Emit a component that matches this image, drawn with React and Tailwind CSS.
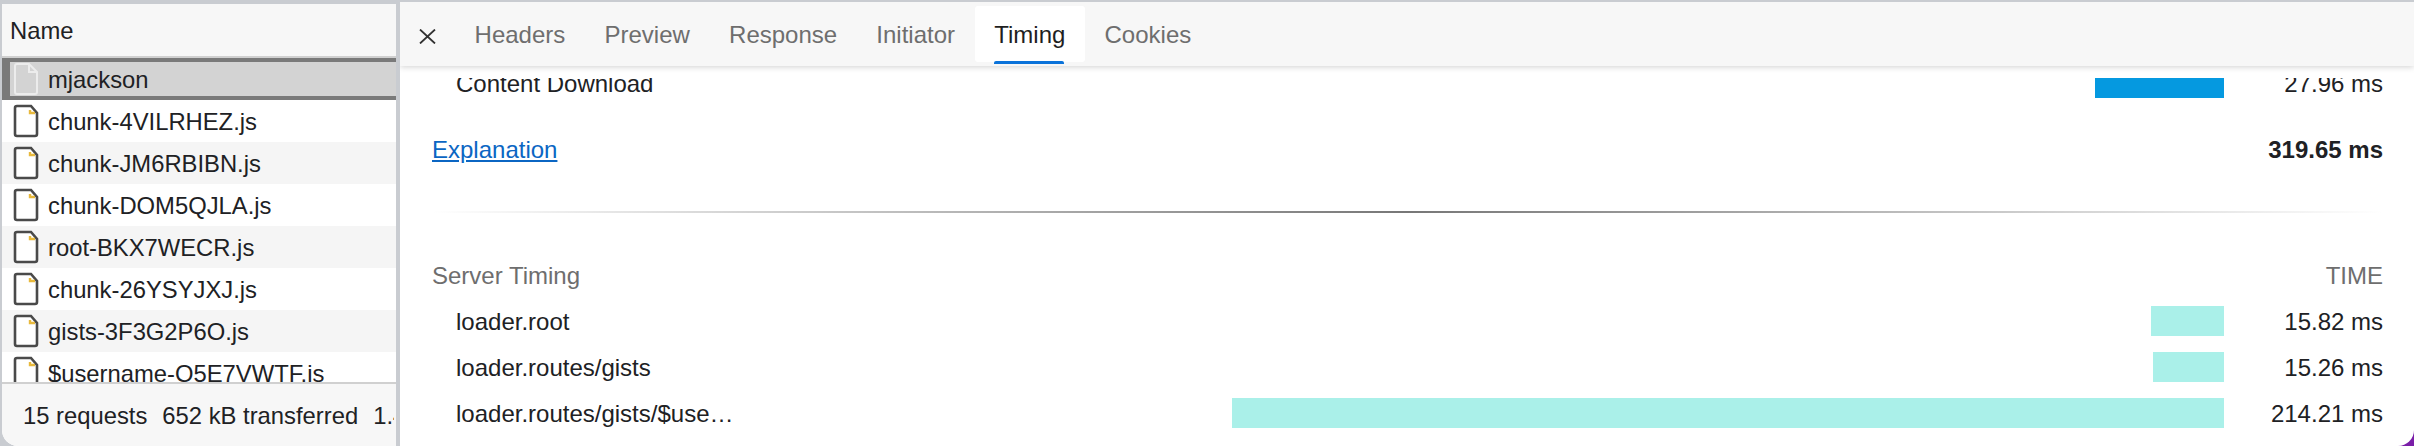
import React from "react";

const requests = [
  { name: "mjackson", selected: true },
  { name: "chunk-4VILRHEZ.js" },
  { name: "chunk-JM6RBIBN.js", striped: true },
  { name: "chunk-DOM5QJLA.js" },
  { name: "root-BKX7WECR.js", striped: true },
  { name: "chunk-26YSYJXJ.js" },
  { name: "gists-3F3G2P6O.js", striped: true },
  { name: "$username-O5E7VWTF.js" },
];

const tabs = ["Headers", "Preview", "Response", "Initiator", "Timing", "Cookies"];

const serverRows = [
  { label: "loader.root", width: "w-[73px]", time: "15.82 ms" },
  { label: "loader.routes/gists", width: "w-[71px]", time: "15.26 ms" },
  { label: "loader.routes/gists/$use…", width: "w-[992px]", time: "214.21 ms" },
];

function FileIcon({ selected }) {
  if (selected) {
    return (
      <svg width="26" height="34" viewBox="0 0 26 34" className="shrink-0">
        <path d="M2 4a2 2 0 0 1 2-2h12l8 8v20a2 2 0 0 1-2 2H4a2 2 0 0 1-2-2z" fill="#d3d3d3" stroke="#ececec" strokeWidth="2" />
        <path d="M16 2v8h8" fill="none" stroke="#ececec" strokeWidth="2" />
      </svg>
    );
  }
  return (
    <svg width="26" height="34" viewBox="0 0 26 34" className="shrink-0">
      <path d="M2 4a2 2 0 0 1 2-2h14l6 7v21a2 2 0 0 1-2 2H4a2 2 0 0 1-2-2z" fill="#fff" stroke="#4a4a4a" strokeWidth="2.6" />
      <path d="M17 6v3h5" fill="none" stroke="#e8b93c" strokeWidth="2.4" />
    </svg>
  );
}

function RequestRow({ name, selected, striped }) {
  if (selected) {
    return (
      <div className="flex h-[42px] shrink-0 items-center gap-[9px] border-y-4 border-l-8 border-[#7a7a7a] bg-[#d3d3d3] pl-[3px] text-[#202124]">
        <FileIcon selected />
        <span className="pt-[2px]">{name}</span>
      </div>
    );
  }
  return (
    <div className={`flex h-[42px] shrink-0 items-center gap-[9px] pl-[11px] text-[#202124] ${striped ? "bg-[#f5f5f5]" : "bg-white"}`}>
      <FileIcon />
      <span className="pt-[2px]">{name}</span>
    </div>
  );
}

function TimingRow({ label, width, color, time }) {
  return (
    <div className="flex h-[46px] items-center pl-[24px] text-[#202124]">
      <span className="w-[300px] shrink-0 whitespace-nowrap pt-[1px]">{label}</span>
      <div className="flex flex-1 justify-end">
        <div className={`h-[30px] ${width} ${color}`}></div>
      </div>
      <span className="w-[159px] shrink-0 pt-[1px] text-right">{time}</span>
    </div>
  );
}

export default function App() {
  return (
    <div className="flex h-[446px] w-[2414px] overflow-hidden bg-[#c9ccd1] font-['Liberation_Sans',Arial,sans-serif] text-[24px]">
      {/* Request list */}
      <div className="ml-[2px] mt-[4px] flex w-[394px] shrink-0 flex-col overflow-hidden rounded-bl-[16px] bg-white text-[23.8px]">
        <div className="flex h-[54px] shrink-0 items-center border-b-2 border-[#d0d0d0] bg-[#f7f7f7] pl-[8px] pt-[1px] text-[#202124]">
          Name
        </div>
        <div className="flex flex-1 flex-col overflow-hidden">
          {requests.map((r) => (
            <RequestRow key={r.name} {...r} />
          ))}
        </div>
        <div className="h-[64px] shrink-0 border-t-2 border-[#d0d0d0] bg-[#f7f7f7] pl-[21px] pr-[2px] text-[#202124]">
          <div className="flex h-full items-center gap-[15px] overflow-hidden whitespace-nowrap pt-[1px]">
            <span>15 requests</span>
            <span>652 kB transferred</span>
            <span>1.4 MB resources</span>
          </div>
        </div>
      </div>

      {/* Detail panel */}
      <div className="ml-[4px] mt-[2px] flex-1 bg-[#7a1ea8]">
        <div className="flex h-full flex-col overflow-hidden rounded-br-[16px] bg-white">
          <div className="relative z-10 flex h-[64px] shrink-0 items-start bg-[#f7f7f7] pt-[4px] shadow-[0_1px_6px_rgba(0,0,0,0.18)]">
            <div className="flex h-[56px] w-[55px] items-center justify-center pt-[4px]">
              <svg width="17" height="15" viewBox="0 0 17 15" fill="none" stroke="#333" strokeWidth="1.8">
                <path d="M1 0.5l15 14M16 0.5l-15 14" />
              </svg>
            </div>
            {tabs.map((tab) =>
              tab === "Timing" ? (
                <div key={tab} className="relative flex h-[56px] items-center rounded-[3px] bg-white px-[19.6px] pt-[1px] text-[#1f1f1f]">
                  {tab}
                  <div className="absolute bottom-[-2px] left-[19px] right-[21px] h-[3px] rounded-t-[2px] bg-[#0b73da]"></div>
                </div>
              ) : (
                <div key={tab} className="flex h-[56px] items-center px-[19.6px] pt-[1px] text-[#6e6e6e]">
                  {tab}
                </div>
              )
            )}
          </div>

          <div className="mt-[12px] flex-1 overflow-hidden pl-[32px] pr-[31px]">
            <div className="-mt-[18px]">
              <TimingRow label="Content Download" width="w-[129px]" color="bg-[#0599e0]" time="27.96 ms" />
              <div className="mt-[20px] flex h-[46px] items-center justify-between pt-[1px] text-[#202124]">
                <a className="text-[#0b66c3] underline">Explanation</a>
                <span className="font-bold">319.65 ms</span>
              </div>
              <div className="mt-[39px] h-[2px] bg-gradient-to-r from-transparent via-[#777] to-transparent"></div>
              <div className="mt-[39px] flex h-[46px] items-center justify-between pt-[1px] text-[#6e6e6e]">
                <span>Server Timing</span>
                <span>TIME</span>
              </div>
              {serverRows.map((row) => (
                <TimingRow key={row.label} {...row} color="bg-[#aaf0e9]" />
              ))}
            </div>
          </div>
        </div>
      </div>
    </div>
  );
}
